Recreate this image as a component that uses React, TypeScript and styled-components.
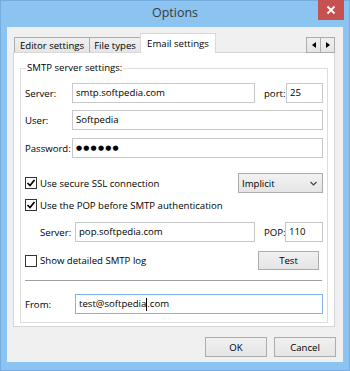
import React from "react";
import styled, { createGlobalStyle } from "styled-components";

const GlobalStyle = createGlobalStyle`
  html, body {
    margin: 0;
    padding: 0;
  }
  body {
    font-family: "Open Sans", "Noto Sans", sans-serif;
    font-size: 9.6px;
    color: #000;
  }
`;

const CheckMark = () => (
  <svg width="10" height="10" viewBox="0 0 10 10">
    <path d="M1.5 5 L4 7.5 L8.5 2" fill="none" stroke="#000" strokeWidth="1.7" />
  </svg>
);

const Check: React.FC<{ checked?: boolean; label: string }> = ({
  checked,
  label,
}) => (
  <CheckLabel>
    <CheckBox>{checked && <CheckMark />}</CheckBox>
    {label}
  </CheckLabel>
);

const App: React.FC = () => {
  return (
    <>
      <GlobalStyle />
      <Window>
        <TitleBar>
          <Title>Options</Title>
          <CloseButton>
            <svg width="10" height="10" viewBox="0 0 10 10">
              <path d="M1.5 1.5 L8.5 8.5 M8.5 1.5 L1.5 8.5" stroke="#fff" strokeWidth="1.8" />
            </svg>
          </CloseButton>
        </TitleBar>
        <Client>
          <TabStrip>
            <Tab $width={76}>Editor settings</Tab>
            <Tab $width={52}>File types</Tab>
            <Tab $width={76} $active>
              Email settings
            </Tab>
            <ScrollButtons>
              <ArrowButton>
                <svg width="4" height="6" viewBox="0 0 4 6">
                  <path d="M4 0 L0 3 L4 6 Z" fill="#000" />
                </svg>
              </ArrowButton>
              <ArrowButton>
                <svg width="4" height="6" viewBox="0 0 4 6">
                  <path d="M0 0 L4 3 L0 6 Z" fill="#000" />
                </svg>
              </ArrowButton>
            </ScrollButtons>
          </TabStrip>
          <Panel>
            <Group>
              <Legend>SMTP server settings:</Legend>
              <Row $mt={9}>
                <FieldLabel $width={47}>Server:</FieldLabel>
                <TextBox>smtp.softpedia.com</TextBox>
                <SideLabel $width={22}>port:</SideLabel>
                <TextBox $width={37}>25</TextBox>
              </Row>
              <Row $mt={7}>
                <FieldLabel $width={47}>User:</FieldLabel>
                <TextBox>Softpedia</TextBox>
              </Row>
              <Row $mt={8}>
                <FieldLabel $width={47}>Password:</FieldLabel>
                <TextBox>
                  <Dots>●●●●●●</Dots>
                </TextBox>
              </Row>
              <Row $mt={15}>
                <Check checked label="Use secure SSL connection" />
                <Select>
                  Implicit
                  <svg width="7" height="5" viewBox="0 0 7 5">
                    <path d="M0.5 1 L3.5 4 L6.5 1" fill="none" stroke="#444" strokeWidth="1.2" />
                  </svg>
                </Select>
              </Row>
              <Row $mt={4} $height={16}>
                <Check checked label="Use the POP before SMTP authentication" />
              </Row>
              <Row $mt={9}>
                <FieldLabel $width={35} $indent={15}>
                  Server:
                </FieldLabel>
                <TextBox>pop.softpedia.com</TextBox>
                <SideLabel $width={21}>POP:</SideLabel>
                <TextBox $width={38}>110</TextBox>
              </Row>
              <Row $mt={9} $height={19}>
                <Check label="Show detailed SMTP log" />
                <PushButton $width={61} $push>
                  Test
                </PushButton>
              </Row>
              <Separator />
              <Row $mt={13}>
                <FieldLabel $width={50}>From:</FieldLabel>
                <TextBox $focused>
                  test@softpedia
                  <Caret />
                  .com
                </TextBox>
              </Row>
            </Group>
          </Panel>
          <Footer>
            <PushButton $width={62}>OK</PushButton>
            <PushButton $width={62}>Cancel</PushButton>
          </Footer>
        </Client>
      </Window>
    </>
  );
};

export default App;

const Window = styled.div`
  width: 350px;
  height: 371px;
  box-sizing: border-box;
  background: #8bc3f1;
  box-shadow: inset 0 0 0 1px #74acdf;
  padding: 0 7px 9px 7px;
  display: flex;
  flex-direction: column;
`;

const TitleBar = styled.div`
  height: 27px;
  display: grid;
  grid-template-columns: 1fr auto 1fr;
  align-items: start;
`;

const Title = styled.div`
  grid-column: 2;
  font-size: 12.5px;
  line-height: 26px;
  color: #3a3a3a;
`;

const CloseButton = styled.div`
  grid-column: 3;
  justify-self: end;
  width: 26px;
  height: 20px;
  margin-right: -1px;
  background: #c75050;
  display: flex;
  align-items: center;
  justify-content: center;
`;

const Client = styled.div`
  flex: 1;
  background: #f0f0f0;
  padding: 6px 8px 5px 6px;
  display: flex;
  flex-direction: column;
`;

const TabStrip = styled.div`
  height: 20px;
  margin-bottom: -1px;
  padding-left: 1px;
  display: flex;
  align-items: flex-end;
  position: relative;
  z-index: 1;
`;

const Tab = styled.div<{ $active?: boolean; $width: number }>`
  box-sizing: border-box;
  width: ${(p) => p.$width}px;
  height: ${(p) => (p.$active ? 20 : 16)}px;
  margin-left: -1px;
  &:first-child {
    margin-left: 0;
  }
  border: 1px solid ${(p) => (p.$active ? "#d9d9d9" : "#acacac")};
  border-bottom: ${(p) => (p.$active ? "none" : "1px solid #d9d9d9")};
  background: ${(p) =>
    p.$active ? "#fff" : "linear-gradient(#f0f0f0, #e5e5e5)"};
  display: flex;
  align-items: center;
  justify-content: center;
  padding-bottom: ${(p) => (p.$active ? 1 : 0)}px;
  white-space: nowrap;
`;

const ScrollButtons = styled.div`
  margin-left: auto;
  display: flex;
  height: 16px;
`;

const ArrowButton = styled.div`
  box-sizing: border-box;
  width: 15px;
  height: 16px;
  border: 1px solid #acacac;
  background: linear-gradient(#f0f0f0, #e5e5e5);
  display: flex;
  align-items: center;
  justify-content: center;
  & + & {
    margin-left: -1px;
  }
`;

const Panel = styled.div`
  height: 275px;
  box-sizing: border-box;
  border: 1px solid #d5d5d5;
  background: #fff;
  padding: 9px 6px 3px 6px;
  display: flex;
  flex-direction: column;
`;

const Group = styled.fieldset`
  flex: 1;
  margin: 0;
  min-width: 0;
  border: 1px solid #dcdcdc;
  padding: 0 4px;
  display: flex;
  flex-direction: column;
`;

const Legend = styled.legend`
  padding: 0 1px;
  margin-left: 1px;
  line-height: 12px;
`;

const Row = styled.div<{ $mt: number; $height?: number }>`
  display: flex;
  align-items: center;
  margin-top: ${(p) => p.$mt}px;
  height: ${(p) => p.$height ?? 20}px;
`;

const FieldLabel = styled.div<{ $width: number; $indent?: number }>`
  width: ${(p) => p.$width}px;
  margin-left: ${(p) => p.$indent ?? 0}px;
  flex: none;
  white-space: nowrap;
`;

const SideLabel = styled.div<{ $width: number }>`
  width: ${(p) => p.$width}px;
  margin-left: 9px;
  flex: none;
  white-space: nowrap;
`;

const TextBox = styled.div<{ $width?: number; $focused?: boolean }>`
  position: relative;
  box-sizing: border-box;
  height: 20px;
  ${(p) => (p.$width ? `width: ${p.$width}px; flex: none;` : "flex: 1;")}
  border: 1px solid ${(p) => (p.$focused ? "#7eb4ea" : "#c8c8c8")};
  background: #fff;
  padding: 0 3px;
  line-height: 18px;
  white-space: nowrap;
  display: flex;
  align-items: center;
`;

const Dots = styled.span`
  font-family: "DejaVu Sans", sans-serif;
  font-size: 7px;
  letter-spacing: 1.2px;
`;

const Caret = styled.span`
  display: inline-block;
  width: 1px;
  height: 13px;
  background: #000;
`;

const CheckLabel = styled.div`
  display: flex;
  align-items: center;
  gap: 3px;
  white-space: nowrap;
`;

const CheckBox = styled.span`
  box-sizing: border-box;
  width: 12px;
  height: 12px;
  border: 1px solid #333;
  background: #fff;
  display: flex;
  align-items: center;
  justify-content: center;
`;

const Select = styled.div`
  margin-left: auto;
  box-sizing: border-box;
  width: 85px;
  height: 20px;
  border: 1px solid #acacac;
  background: linear-gradient(#f2f2f2, #e5e5e5);
  padding: 0 5px 0 3px;
  display: flex;
  align-items: center;
  justify-content: space-between;
`;

const PushButton = styled.div<{ $width: number; $push?: boolean }>`
  box-sizing: border-box;
  width: ${(p) => p.$width}px;
  height: ${(p) => (p.$push ? 19 : 20)}px;
  margin-left: ${(p) => (p.$push ? "auto" : "0")};
  margin-right: ${(p) => (p.$push ? 4 : 0)}px;
  border: 1px solid #acacac;
  background: linear-gradient(#f0f0f0, #e5e5e5);
  display: flex;
  align-items: center;
  justify-content: center;
`;

const Separator = styled.div`
  height: 1px;
  margin: 10px 1px 0 0;
  background: #a0a0a0;
`;

const Footer = styled.div`
  display: flex;
  justify-content: flex-end;
  gap: 7px;
  margin: 10px -1px 0 0;
`;
